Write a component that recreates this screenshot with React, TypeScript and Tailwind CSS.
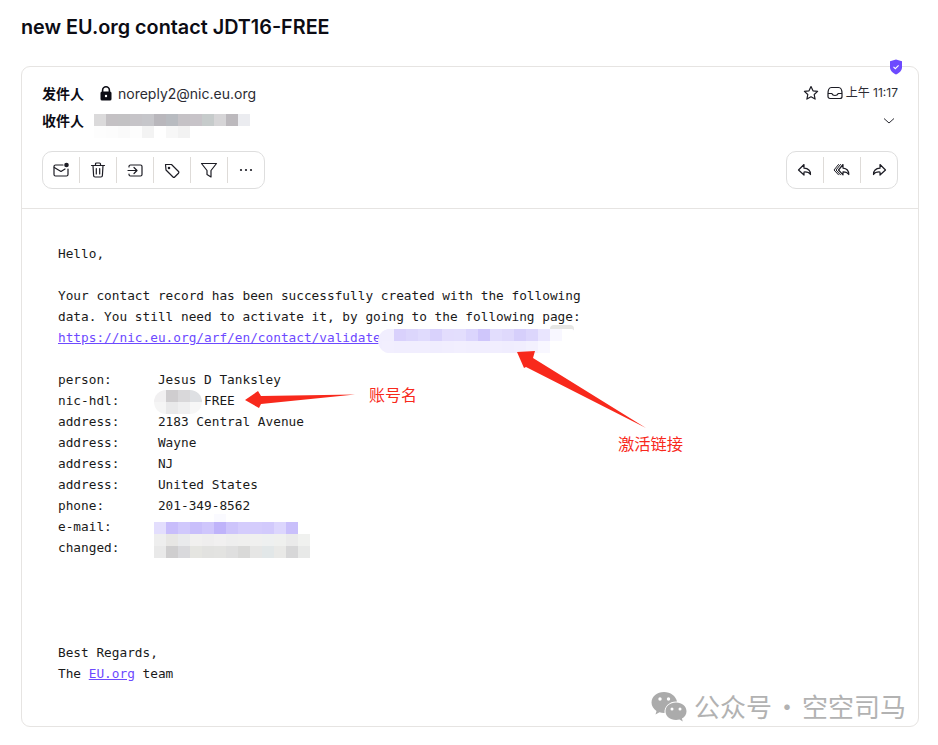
import React from "react";

const I = ({ children, w = 18, h = 18, cls = "" }: { children: React.ReactNode; w?: number; h?: number; cls?: string }) => (
  <svg width={w} height={h} viewBox="0 0 18 18" fill="none" stroke="#1c1c24" strokeWidth="1.2" strokeLinejoin="round" strokeLinecap="round" className={cls}>
    {children}
  </svg>
);

const Pixels = ({ rows, left, top, cell = 12, cls = "" }: { rows: string[][]; left: number; top: number; cell?: number; cls?: string }) => (
  <div className={`absolute flex flex-col overflow-hidden ${cls}`} style={{ left, top }}>
    {rows.map((r, i) => (
      <div key={i} className="flex">
        {r.map((c, j) => (
          <div key={j} style={{ width: cell, height: cell, background: c }} />
        ))}
      </div>
    ))}
  </div>
);

const Toolbar = ({ items }: { items: React.ReactNode[] }) => (
  <div className="flex h-[38px] items-center rounded-[10px] border border-[#dedede] bg-white">
    {items.map((it, i) => (
      <React.Fragment key={i}>
        {i > 0 && <div className="h-[26px] w-px bg-[#dedbd8]" />}
        <div className="flex h-full w-[36px] items-center justify-center">{it}</div>
      </React.Fragment>
    ))}
  </div>
);

export default function App() {
  return (
    <div className="relative h-[745px] w-[938px] overflow-hidden bg-white pl-[21px] pr-[19px] font-['Inter','Noto_Sans_CJK_SC',sans-serif] text-[#0c0c14]">
      <h1 className="flex h-[66px] items-start pt-[15px] text-[19.8px] font-semibold leading-[24px]">new EU.org contact JDT16-FREE</h1>

      <div className="relative h-[661px] rounded-[9px] border border-[#e6e4e2]">
        <div className="h-[142px] border-b border-[#e6e4e2] pl-[20px] pr-[20px] pt-[13px]">
          <div className="flex h-[27px] items-center text-[14px]">
            <span className="w-[58px] font-['Noto_Sans_CJK_SC',sans-serif] text-[14px] font-bold">发件人</span>
            <svg width="12" height="15" viewBox="0 0 12 15" className="mr-[6px]">
              <path d="M2.6 6V4.200a3.400 3.400 0 0 1 6.800 0V6" fill="none" stroke="#0c0c14" strokeWidth="1.6" />
              <rect x="0.5" y="5.500" width="11" height="9" rx="1.600" fill="#0c0c14" />
              <circle cx="6" cy="10" r="1.200" fill="#fff" />
            </svg>
            <span className="text-[#2b2b33]">noreply2@nic.eu.org</span>
            <div className="ml-auto flex items-center">
              <svg width="16" height="16" viewBox="0 0 16 16" fill="none" stroke="#1c1c24" strokeWidth="1.2" strokeLinejoin="round" className="mr-[7px] -translate-x-[1px] -translate-y-[1px]">
                <path d="M8 1.500l2 4.300 4.600.6-3.400 3.100.9 4.600L8 11.800l-4.100 2.300.9-4.600L1.400 6.400 6 5.800z" />
              </svg>
              <svg width="16" height="16" viewBox="0 0 16 16" fill="none" stroke="#1c1c24" strokeWidth="1.2" strokeLinejoin="round" className="mr-[3px] -translate-y-[1px]">
                <path d="M1 8.500c0-3.500 1-6 3.500-6h7c2.500 0 3.500 2.500 3.500 6v3a2 2 0 0 1-2 2H3a2 2 0 0 1-2-2z" />
                <path d="M1 8.500h3.800c.5 1.300 1.500 2 3.200 2s2.700-.7 3.200-2H15" />
              </svg>
              <span className="-translate-y-[1px] text-[12px] text-[#2b2b33]">上午 11:17</span>
            </div>
          </div>
          <div className="flex h-[27px] items-center">
            <span className="w-[52px] font-['Noto_Sans_CJK_SC',sans-serif] text-[14px] font-bold">收件人</span>
            <Pixels
              left={72}
              top={47}
              rows={[
                ["#dbdadb", "#c4c1c4", "#c3c2c4", "#c6c4c8", "#c6c6ca", "#b9b7bc", "#b8bbc0", "#c5c2c6", "#c7c3c8", "#c6cbcb", "#d6d5d7", "#bcb9bd", "#ebecf0"],
                ["#fdfdfd", "#fcfcfc", "#fafafa", "#fdfdfd", "#f3f3f3", "#ffffff", "#f7f7f7", "#f2f2f2", "#ffffff", "#ffffff", "#ffffff", "#ffffff", "#ffffff"],
              ]}
            />
            <svg width="12" height="12" viewBox="0 0 12 12" fill="none" stroke="#2b2b33" strokeWidth="1" className="ml-auto mr-[3px]">
              <path d="M1 3.500l5 4.500 5-4.500" />
            </svg>
          </div>
          <div className="mt-[17px] flex items-center justify-between">
            <Toolbar
              items={[
                <I key="a">
                  <path d="M11 4H3.500A1.500 1.500 0 0 0 2 5.500v8A1.500 1.500 0 0 0 3.500 15h11a1.500 1.500 0 0 0 1.500-1.500V8" />
                  <path d="M2.300 6.500L9 10.500l4-2.500" />
                  <circle cx="14.500" cy="4" r="2.300" fill="#1c1c24" stroke="none" />
                </I>,
                <I key="b">
                  <path d="M2.500 4.500h13M6.500 4.500V3a1 1 0 0 1 1-1h3a1 1 0 0 1 1 1v1.500M4 4.500l.6 10a1.500 1.500 0 0 0 1.500 1.500h5.800a1.500 1.500 0 0 0 1.500-1.500l.6-10M7.300 7.500v5.500M10.700 7.500v5.500" />
                </I>,
                <I key="c">
                  <path d="M3 6V5.500A1.500 1.500 0 0 1 4.500 4h10A1.500 1.500 0 0 1 16 5.500v8a1.500 1.500 0 0 1-1.500 1.500h-10A1.500 1.500 0 0 1 3 13.500V13" />
                  <path d="M2 9.500h9M8 6.500l3 3-3 3" />
                </I>,
                <I key="d">
                  <path d="M2.500 3.500h6l7 7a1.200 1.200 0 0 1 0 1.700l-3.800 3.800a1.200 1.200 0 0 1-1.700 0l-7-7z" />
                  <circle cx="6" cy="7" r="0.7" fill="#1c1c24" />
                </I>,
                <I key="e">
                  <path d="M1.500 2.500h15L11 9.500v6.500l-4-2.500v-4z" />
                </I>,
                <svg key="f" width="14" height="4" viewBox="0 0 14 4" fill="#1c1c24">
                  <circle cx="2" cy="2" r="1.100" />
                  <circle cx="7" cy="2" r="1.100" />
                  <circle cx="12" cy="2" r="1.100" />
                </svg>,
              ]}
            />
            <Toolbar
              items={[
                <I key="r">
                  <path d="M8 3.500L2.500 9 8 14v-3c3-.2 5.200 .4 6.500 2.500 0-4-2.300-6-6.500-6.300z" />
                </I>,
                <I key="ra">
                  <path d="M10 3.500L5.500 9l4.500 4.800v-3c2.500-.1 4.300 .5 5.800 2.700 0-4-1.800-6-5.800-6.400z" />
                  <path d="M7.500 3.500L3 9l4.500 4.800" strokeWidth="1" />
                  <path d="M5.500 3.500L1 9l4.500 4.800" strokeWidth="1" />
                </I>,
                <I key="fw">
                  <path d="M10 3.500L15.500 9 10 14v-3c-3-.2-5.200 .4-6.500 2.500 0-4 2.300-6 6.500-6.300z" />
                </I>,
              ]}
            />
          </div>
        </div>

        <div className="whitespace-pre pl-[36px] pt-[34px] font-['DejaVu_Sans_Mono',monospace] text-[12.77px] leading-[21px] text-[#1a1a1a]">
          <div>{"Hello,\n\nYour contact record has been successfully created with the following\ndata. You still need to activate it, by going to the following page:"}</div>
          <div>
            <a className="text-[#6d4aff] underline">https://nic.eu.org/arf/en/contact/validate</a>
          </div>
          <div>{"\nperson:      Jesus D Tanksley\nnic-hdl:           FREE\naddress:     2183 Central Avenue\naddress:     Wayne\naddress:     NJ\naddress:     United States\nphone:       201-349-8562\ne-mail:\nchanged:\n\n\n\n\nBest Regards,"}</div>
          <div>
            <span>The </span>
            <a className="text-[#6d4aff] underline">EU.org</a>
            <span> team</span>
          </div>
        </div>
      </div>

      <svg width="14" height="16" viewBox="0 0 14 16" className="absolute left-[889px] top-[59px]">
        <path d="M7 .5l6 1.800v6c0 3.500-3 6-6 7.200-3-1.200-6-3.700-6-7.200v-6z" fill="#6d4aff" />
        <path d="M4.500 7.800l1.800 1.800 3.300-3.300" fill="none" stroke="#fff" strokeWidth="1.100" />
      </svg>

      <div className="absolute left-[550px] top-[325px] h-[5px] w-[24px] rounded-t-[4px] bg-[#e6e6e4]" />
      <Pixels
        cls="rounded-l-[12px] rounded-tr-[3px] bg-[#f1eefe] pl-[4px]"
        left={378}
        top={329}
        rows={[
          ["#f1eefe", "#d9d1fc", "#dcd6fc", "#e0dbfd", "#d9d2fc", "#e3ddfd", "#e3defd", "#dbd5fd", "#cfc6fb", "#e2ddfd", "#dfd9fc", "#d6cffb", "#dcd6fc", "#e9e5fe", "#f8f7ff", "#ffffff"],
          ["#f2effe", "#f1eefe", "#f1eefe", "#f1eefe", "#f0edfe", "#f1eefe", "#f2effe", "#f1eefe", "#f1eefe", "#f1eefe", "#f0edfe", "#f1eefe", "#f3f1fe", "#f8f7ff", "#ffffff", "#ffffff"],
        ]}
      />
      <Pixels
        cls="rounded-[14px]"
        left={154}
        top={390}
        rows={[
          ["#f1f0f1", "#cfcdcf", "#d9d8da", "#dee0e3"],
          ["#f5f5f5", "#e9e9ea", "#efeff0", "#f7f7f7"],
        ]}
      />
      <div className="absolute left-[214px] top-[514px] h-[8px] w-[12px] bg-[#fafaff]" />
      <Pixels
        left={154}
        top={522}
        rows={[
          ["#e3defd", "#c8bdfb", "#d0c8fc", "#c9bffb", "#cfc6fc", "#bfb3fa", "#cdc4fb", "#d4ccfc", "#d4ccfc", "#d2cafc", "#dcd6fd", "#c9bffb", "#ffffff"],
          ["#eeeeee", "#e7e6e4", "#e9eaec", "#f1f0ef", "#efeeee", "#f1f0f0", "#eeeeee", "#efefee", "#f0f0ef", "#eef0f0", "#eff0ee", "#eaeaea", "#f0f1ef"],
          ["#e9e9e9", "#cfcecf", "#d9d9dc", "#e5e5e1", "#e2e2e0", "#e3e3e1", "#dfdfdf", "#d9d9d8", "#e6e6e5", "#e2e7e8", "#e9e9e7", "#d7d7d8", "#e8e9e8"],
        ]}
      />

      <svg width="938" height="745" viewBox="0 0 938 745" className="pointer-events-none absolute left-0 top-0">
        <polygon points="245,400 258,391 261,396 355,394.500 261,404 259,408" fill="#f8291c" />
        <polygon points="517,352 535,351 533,358 646,428 526,367 524,368" fill="#f8291c" />
      </svg>
      <span className="absolute left-[369px] top-[383px] font-['Noto_Sans_CJK_SC',sans-serif] text-[16px] leading-[22px] text-[#f8291c]">账号名</span>
      <span className="absolute left-[618px] top-[432px] font-['Noto_Sans_CJK_SC',sans-serif] text-[16.300px] leading-[22px] text-[#f8291c]">激活链接</span>

      <div className="absolute left-[651px] top-[688px] flex items-center font-['Noto_Sans_CJK_SC',sans-serif] text-[26px] leading-[36px] text-[#b2b2b2]">
        <svg width="36" height="32" viewBox="0 0 36 32" fill="#ababab" className="mr-[7px]">
          <path d="M13 2C6 2 0.500 6.500 0.500 12.500c0 3.500 2 6.500 5 8.500l-1 3.500 4-2.200c1.400.4 2.900 .6 4.500 .6h.5C13 16 19 11 26 11.500 24.800 6 19.500 2 13 2z" />
          <path d="M25 12.500c-6 0-10.500 3.800-10.500 8.700S19 30 25 30c1.200 0 2.400-.2 3.500-.5l3.300 2-.9-3c3-1.600 4.600-4.300 4.600-7.300 0-4.900-4.500-8.700-10.500-8.700z" />
          <circle cx="9" cy="9" r="1.700" fill="#fff" />
          <circle cx="17.500" cy="9" r="1.700" fill="#fff" />
          <circle cx="21" cy="19" r="1.500" fill="#fff" />
          <circle cx="29" cy="19" r="1.500" fill="#fff" />
        </svg>
        <span>公众号</span>
        <span className="w-[30px] text-center">·</span>
        <span>空空司马</span>
      </div>
    </div>
  );
}
